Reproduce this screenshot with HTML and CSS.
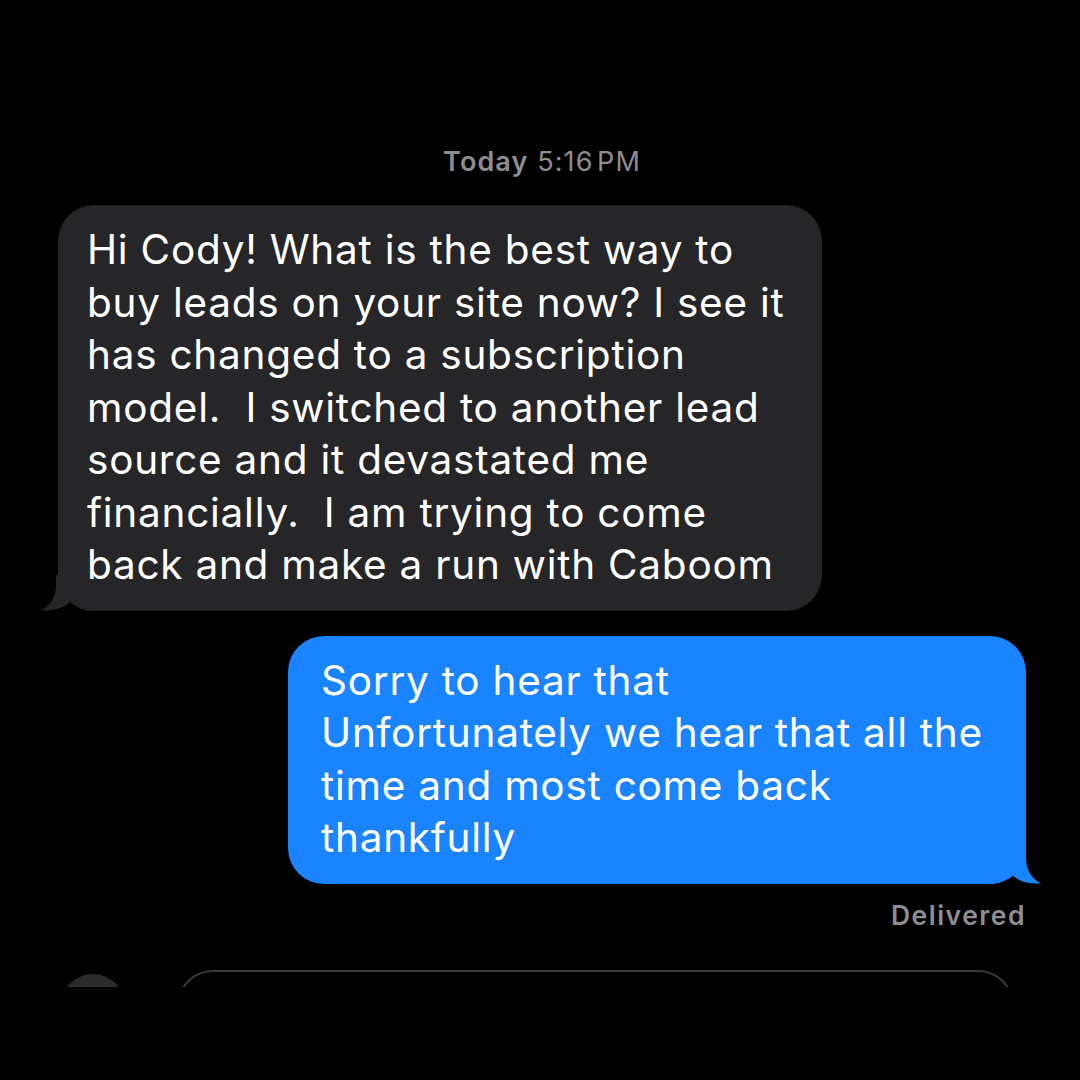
FILE: index.html
```html
<!doctype html>
<html lang="en">
<head>
  <meta charset="UTF-8">
  <meta name="viewport" content="width=device-width, initial-scale=1.0">
  <title>Messages</title>
  <link rel="stylesheet" href="styles.css">
</head>
<body>
  <div class="thread">
    <div class="timestamp"><span class="day">Today</span> 5:16&#8202;PM</div>

    <div class="bubble received">
      Hi Cody! What is the best way to<br>
      buy leads on your site now? I see it<br>
      has changed to a subscription<br>
      model.&nbsp; I switched to another lead<br>
      source and it devastated me<br>
      financially.&nbsp; I am trying to come<br>
      back and make a run with Caboom
      <svg class="tail" width="52" height="36" viewBox="0 0 52 36">
        <path d="M0 0 H36 V10 C36 22 42 31 51 35.5 C41 36 29 34 22 27 C16 32 8 36 0 36 Z" fill="#262628"/>
      </svg>
    </div>

    <div class="bubble sent">
      Sorry to hear that<br>
      Unfortunately we hear that all the<br>
      time and most come back<br>
      thankfully
      <svg class="tail" width="52" height="36" viewBox="0 0 52 36">
        <path d="M0 0 H36 V10 C36 22 42 31 51 35.5 C41 36 29 34 22 27 C16 32 8 36 0 36 Z" fill="#1a84ff"/>
      </svg>
    </div>

    <div class="status">Delivered</div>

    <div class="composer">
      <div class="apps-button"></div>
      <div class="input-field"></div>
    </div>
  </div>
</body>
</html>
```

FILE: styles.css
```css
* {
  box-sizing: border-box;
}

html, body {
  margin: 0;
  background-color: #000;
}

body {
  width: 1080px;
  height: 1080px;
  overflow: hidden;
  font-family: Inter, 'Noto Sans', sans-serif;
  color: #fff;
}

.thread {
  display: flex;
  flex-direction: column;
  padding: 140px 54px 0 58px;
}

.timestamp {
  text-align: center;
  font-size: 27px;
  line-height: 44px;
  letter-spacing: 1.1px;
  color: #8d8d92;
  margin-bottom: 21px;
  padding-left: 0;
}

.timestamp .day {
  font-weight: 600;
}

.bubble {
  position: relative;
  z-index: 0;
  font-size: 40.5px;
  line-height: 52.5px;
  letter-spacing: 0.75px;
  padding: 19px 20px 19px 29px;
  border-radius: 36px;
  white-space: nowrap;
}

.bubble .tail {
  position: absolute;
  bottom: 0;
  z-index: -1;
}

.received {
  align-self: flex-start;
  width: 764px;
  background-color: #262628;
}

.received .tail {
  left: -18px;
  transform: scaleX(-1);
}

.sent {
  align-self: flex-end;
  width: 738px;
  margin-top: 25px;
  padding-left: 33px;
  background-color: #1a84ff;
}

.sent .tail {
  right: -16px;
}

.status {
  align-self: flex-end;
  margin-top: 16px;
  font-size: 26.5px;
  line-height: 30px;
  font-weight: 600;
  letter-spacing: 1.5px;
  color: #8e8e93;
  padding-right: 0;
}

.composer {
  display: flex;
  align-items: flex-start;
  height: 17px;
  margin-top: 40px;
  overflow: hidden;
}

.apps-button {
  width: 64px;
  height: 64px;
  margin: 4px 0 0 3px;
  border-radius: 50%;
  background-color: #2c2c2e;
}

.input-field {
  width: 837px;
  height: 72px;
  margin-left: 52px;
  border: 2px solid #3a3a3c;
  border-radius: 36px;
}
```
